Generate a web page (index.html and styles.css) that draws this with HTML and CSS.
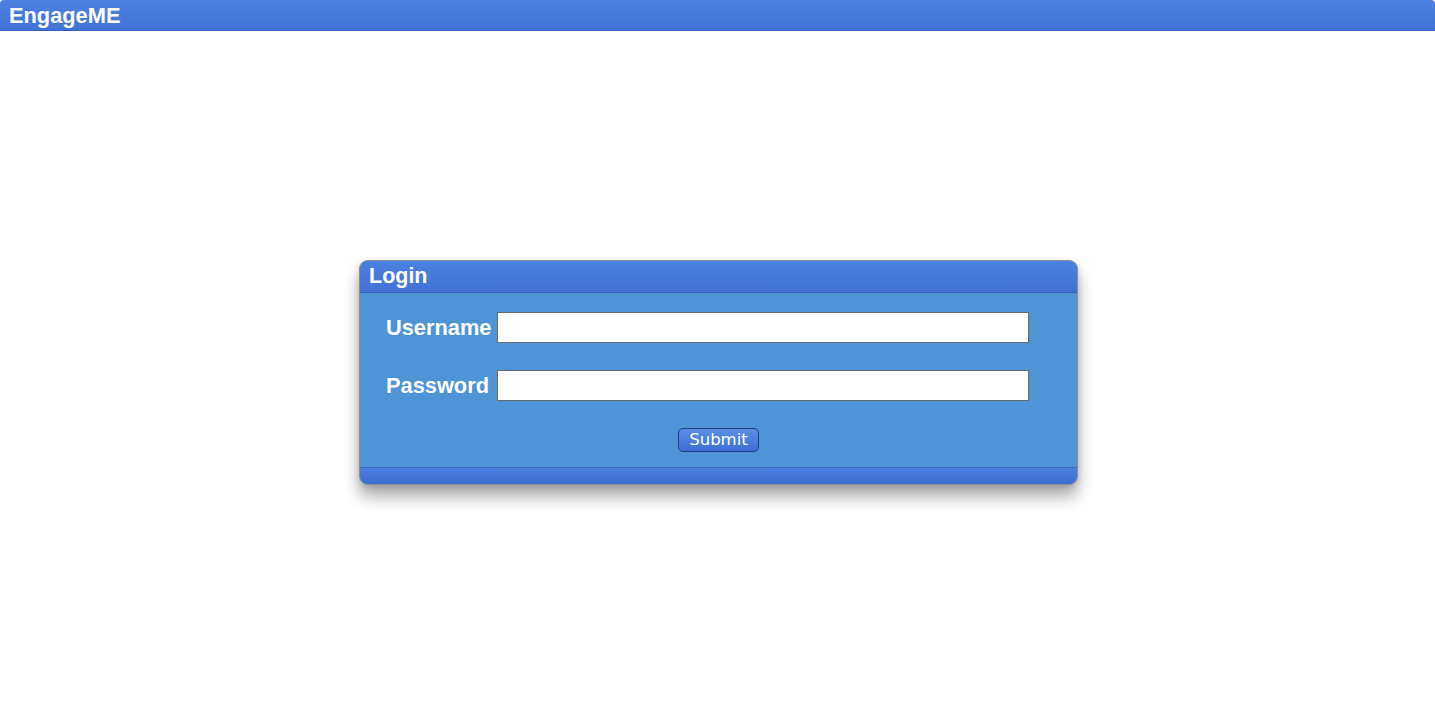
FILE: index.html
```html
<!DOCTYPE html>
<html>
<head>
<meta charset="utf-8">
<title>EngageME</title>
<link rel="stylesheet" href="styles.css">
</head>
<body>
<header class="topbar">EngageME</header>
<main class="stage">
  <section class="panel">
    <div class="panel-head">Login</div>
    <form class="panel-body">
      <table class="fields">
        <tr>
          <td class="label">Username</td>
          <td><input class="field" type="text"></td>
        </tr>
        <tr>
          <td class="label">Password</td>
          <td><input class="field" type="password"></td>
        </tr>
      </table>
      <div class="actions"><button class="submit" type="button">Submit</button></div>
    </form>
    <div class="panel-foot"></div>
  </section>
</main>
</body>
</html>
```
FILE: styles.css
```css
html, body {
  margin: 0;
  padding: 0;
  background: #ffffff;
  font-family: "Liberation Sans", Arial, sans-serif;
}
.topbar {
  height: 31px;
  box-sizing: border-box;
  background: linear-gradient(#4d80e0, #4274d8);
  border-bottom: 1px solid #2f62c4;
  border-top-left-radius: 4px;
  border-top-right-radius: 4px;
  color: #fff;
  font-weight: bold;
  font-size: 21.8px;
  line-height: 31px;
  padding-left: 9px;
}
.stage {
  display: flex;
  justify-content: center;
  padding-top: 229px;
  padding-left: 2px;
  padding-bottom: 40px;
}
.panel {
  width: 719px;
  box-sizing: border-box;
  border: 1px solid #8a8f99;
  border-radius: 9px;
  overflow: hidden;
  background: #5094d8;
  box-shadow: 0 12px 16px rgba(0,0,0,0.32), 0 2px 6px rgba(0,0,0,0.15);
}
.panel-head {
  height: 32px;
  box-sizing: border-box;
  background: linear-gradient(#4b80e0, #4272d6);
  border-bottom: 1px solid #3562c0;
  color: #fff;
  font-weight: bold;
  font-size: 21.5px;
  line-height: 31px;
  padding-left: 9px;
}
.panel-body {
  margin: 0;
  padding: 19px 0 15px 23px;
}
.fields {
  border-collapse: separate;
  border-spacing: 0;
}
.fields td {
  padding: 0 0 27px 0;
  vertical-align: middle;
}
.label {
  color: #fff;
  font-weight: bold;
  font-size: 21.8px;
  padding-right: 6px !important;
  padding-left: 3px !important;
  white-space: nowrap;
}
.field {
  display: block;
  width: 532px;
  height: 31px;
  box-sizing: border-box;
  border: 1px solid #6a6a6a;
  background: #fff;
  margin: 0;
  padding: 2px 4px;
  font-size: 16px;
}
.actions {
  display: flex;
  justify-content: center;
  margin-left: -23px;
}
.submit {
  width: 81px;
  height: 24px;
  box-sizing: border-box;
  border: 1px solid #23407a;
  border-radius: 5px;
  background: linear-gradient(#5a8ee6, #3e6ed6);
  color: #fff;
  font-family: "DejaVu Sans", sans-serif;
  font-size: 16.5px;
  line-height: 20px;
  padding: 0;
}
.panel-foot {
  height: 17px;
  box-sizing: border-box;
  border-top: 1px solid #3a6bc0;
  background: linear-gradient(#4b80e0, #3e6cd2);
}
```
